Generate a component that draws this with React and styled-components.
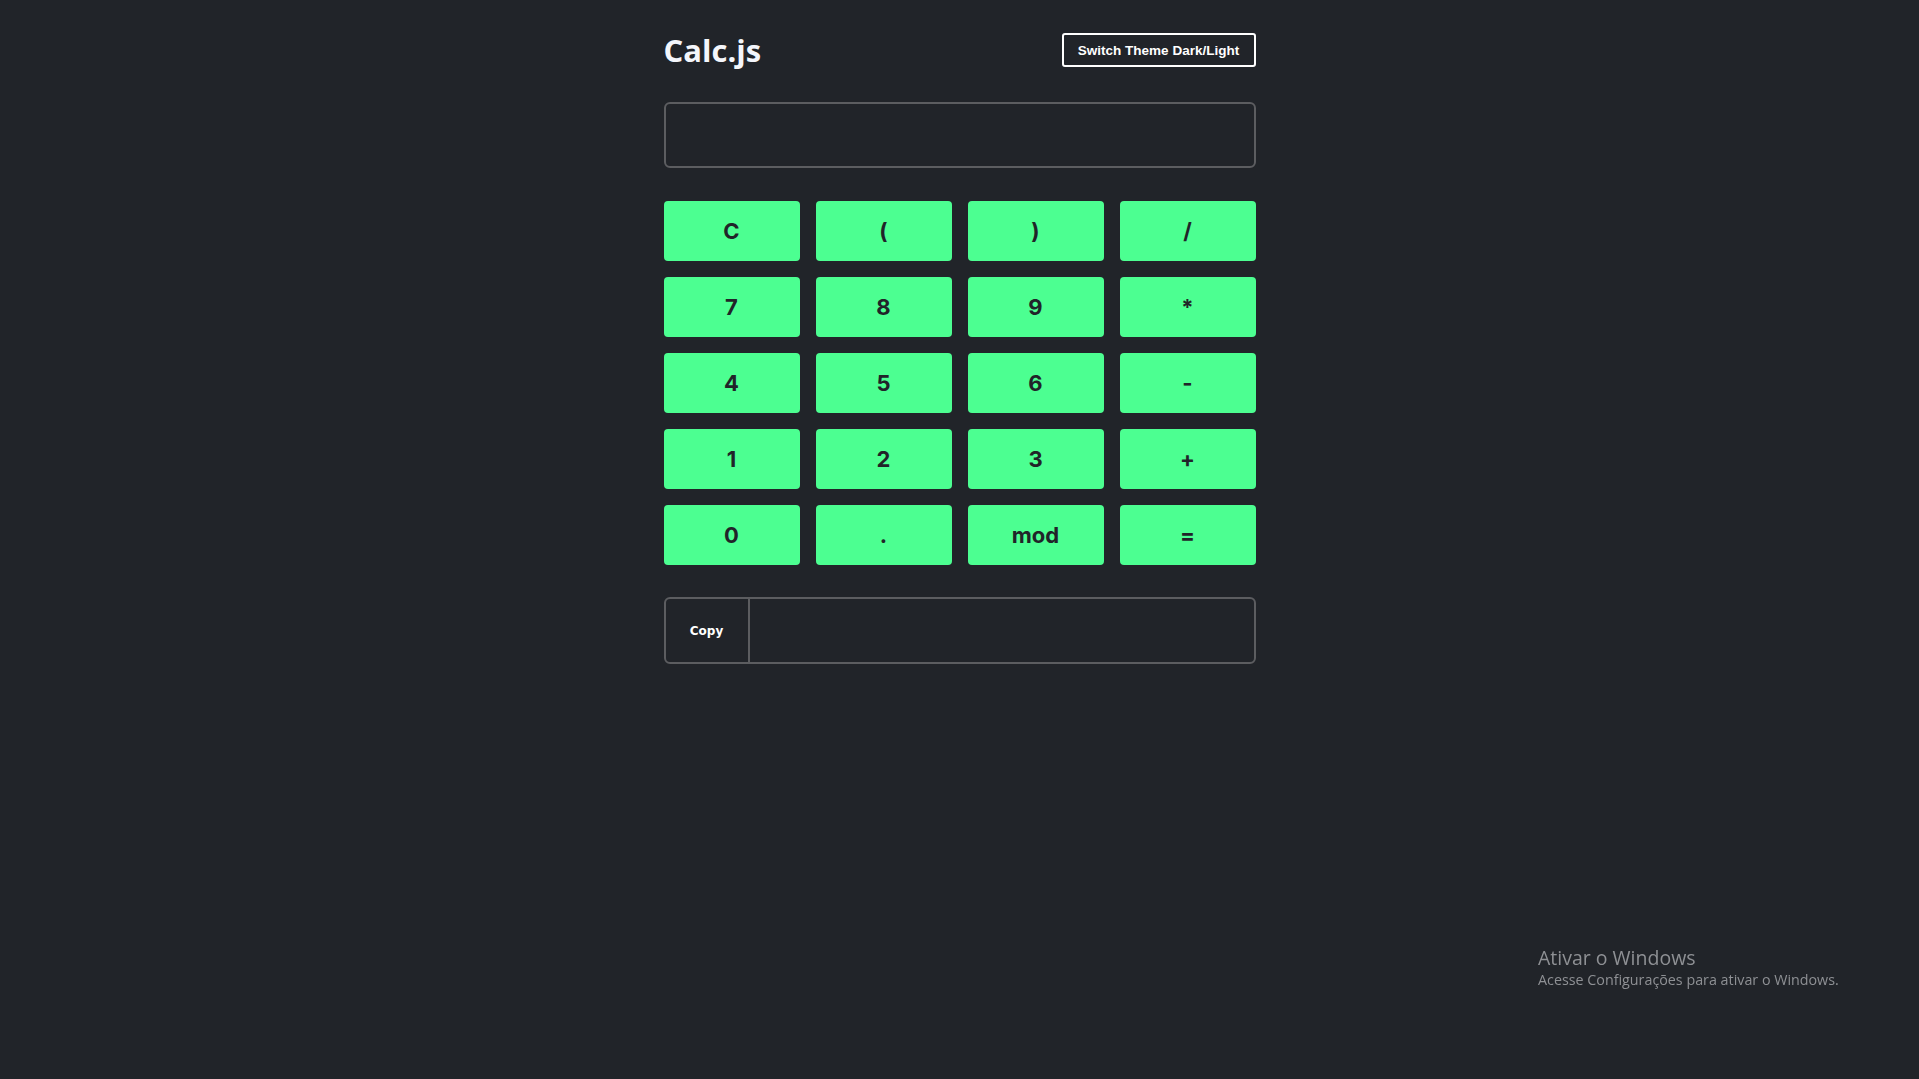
import styled, { createGlobalStyle } from "styled-components";

const GlobalStyle = createGlobalStyle`
  html, body {
    margin: 0;
    padding: 0;
    background: #212429;
    min-height: 100%;
  }
  body {
    font-family: Inter, "Liberation Sans", Arial, sans-serif;
  }
`;

const Page = styled.div`
  min-height: 1079px;
  background: #212429;
  padding-top: 33px;
  box-sizing: border-box;
`;

const Calculator = styled.main`
  width: 592px;
  margin: 0 auto;
  display: flex;
  flex-direction: column;
`;

const Header = styled.header`
  display: flex;
  justify-content: space-between;
  align-items: center;
  height: 34px;
`;

const Title = styled.h1`
  margin: 0;
  font-family: "Open Sans", sans-serif;
  font-weight: 700;
  font-size: 31px;
  color: #f4f6fb;
`;

const ThemeButton = styled.button`
  width: 194px;
  height: 34px;
  background: transparent;
  color: #ffffff;
  border: 2px solid #ffffff;
  border-radius: 3px;
  font-family: "Liberation Sans", Arial, sans-serif;
  font-weight: 700;
  font-size: 13.5px;
  cursor: pointer;
`;

const Display = styled.input`
  margin-top: 35px;
  height: 66px;
  box-sizing: border-box;
  background: #212429;
  border: 2px solid #5c5d60;
  border-radius: 6px;
  color: #ffffff;
  font-size: 28px;
  padding: 0 16px;
  outline: none;
`;

const Keypad = styled.div`
  margin-top: 33px;
  display: grid;
  grid-template-columns: repeat(4, 136px);
  grid-auto-rows: 60px;
  gap: 16px;
`;

const Key = styled.button`
  background: #4cff91;
  border: none;
  border-radius: 4px;
  color: #212429;
  font-family: Inter, "Liberation Sans", Arial, sans-serif;
  font-weight: 700;
  font-size: 22px;
  cursor: pointer;
`;

const CopyRow = styled.div`
  margin-top: 32px;
  height: 67px;
  box-sizing: border-box;
  display: flex;
  border: 2px solid #5c5d60;
  border-radius: 6px;
  overflow: hidden;
`;

const CopyButton = styled.button`
  width: 84px;
  background: transparent;
  border: none;
  border-right: 2px solid #5c5d60;
  color: #ffffff;
  font-family: "DejaVu Sans", Verdana, sans-serif;
  font-weight: 700;
  font-size: 12px;
  cursor: pointer;
`;

const CopyField = styled.input`
  flex: 1;
  background: transparent;
  border: none;
  color: #ffffff;
  outline: none;
  padding: 0 12px;
`;

const Watermark = styled.div`
  position: fixed;
  left: 1538px;
  top: 945px;
  color: #8e9094;
  font-family: "Open Sans", sans-serif;
  pointer-events: none;
`;

const WatermarkTitle = styled.div`
  font-size: 19.5px;
  line-height: 25px;
`;

const WatermarkText = styled.div`
  font-size: 14.3px;
  line-height: 20px;
`;

const keys = ["C", "(", ")", "/", "7", "8", "9", "*", "4", "5", "6", "-", "1", "2", "3", "+", "0", ".", "mod", "="];

export default function App() {
  return (
    <Page>
      <GlobalStyle />
      <Calculator>
        <Header>
          <Title>Calc.js</Title>
          <ThemeButton>Switch Theme Dark/Light</ThemeButton>
        </Header>
        <Display readOnly />
        <Keypad>
          {keys.map((k) => (
            <Key key={k}>{k}</Key>
          ))}
        </Keypad>
        <CopyRow>
          <CopyButton>Copy</CopyButton>
          <CopyField readOnly />
        </CopyRow>
      </Calculator>
      <Watermark>
        <WatermarkTitle>Ativar o Windows</WatermarkTitle>
        <WatermarkText>Acesse Configurações para ativar o Windows.</WatermarkText>
      </Watermark>
    </Page>
  );
}
